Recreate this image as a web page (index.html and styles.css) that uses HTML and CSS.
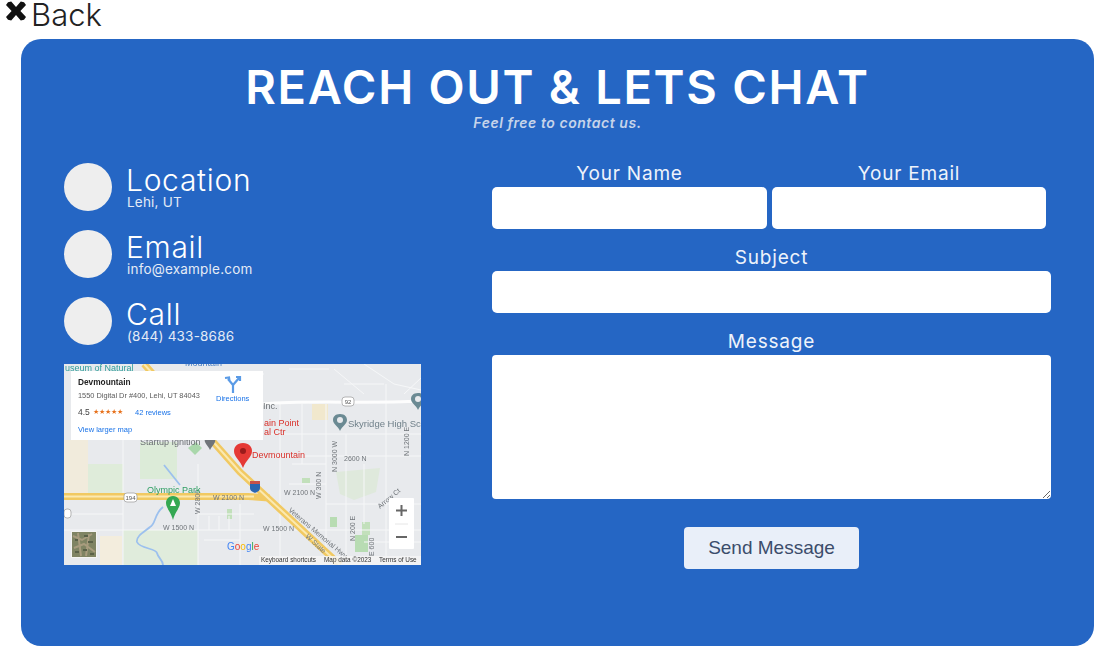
FILE: index.html
```html
<!DOCTYPE html>
<html lang="en">
<head>
    <meta charset="UTF-8">
    <meta name="viewport" content="width=device-width, initial-scale=1.0">
    <title>Contact</title>
    <link rel="stylesheet" href="styles.css">
</head>
<body>
    <a class="back-link" href="#">
        <svg class="back-icon" viewBox="0 0 22 20" aria-hidden="true">
            <path d="M3 1.2 L6.2 0.4 L11 6 L15.8 0.4 L19 1.2 L21 4 L15.4 10 L21 16 L19 18.8 L15.8 19.6 L11 14 L6.2 19.6 L3 18.8 L1 16 L6.6 10 L1 4 Z"/>
        </svg>
        <span>Back</span>
    </a>

    <main class="contact-card">
        <h1>REACH OUT &amp; LETS CHAT</h1>
        <p class="tagline">Feel free to contact us.</p>

        <div class="contact-columns">
            <section class="contact-info">
                <div class="info-row">
                    <div class="info-circle"></div>
                    <div>
                        <h2>Location</h2>
                        <p>Lehi, UT</p>
                    </div>
                </div>
                <div class="info-row">
                    <div class="info-circle"></div>
                    <div>
                        <h2>Email</h2>
                        <p>info@example.com</p>
                    </div>
                </div>
                <div class="info-row">
                    <div class="info-circle"></div>
                    <div>
                        <h2>Call</h2>
                        <p>(844) 433-8686</p>
                    </div>
                </div>

                <svg class="map" viewBox="0 0 357 201" role="img" aria-label="Map of Devmountain in Lehi">
                    <rect width="357" height="201" fill="#e8eaed"/>

                    <!-- parks and land -->
                    <rect x="59" y="166" width="75" height="35" fill="#e0ecdc"/>
                    <rect x="24" y="100" width="35" height="29" fill="#dfecda"/>
                    <rect x="0" y="76" width="24" height="53" fill="#f1ebdc"/>
                    <rect x="36" y="172" width="22" height="29" fill="#f3eddd"/>
                    <rect x="76" y="78" width="37" height="37" fill="#dcebd8"/>
                    <path d="M272 108 L316 104 L312 128 L290 136 L276 130 Z" fill="#dfe9dc"/>
                    <rect x="266" y="153" width="7" height="10" fill="#b8dcb3"/>
                    <rect x="298" y="158" width="8" height="13" fill="#c2e0bb"/>
                    <rect x="291" y="171" width="13" height="17" fill="#b8dcb3"/>
                    <rect x="238" y="114" width="8" height="5" fill="#c2e0bb"/>
                    <rect x="163" y="145" width="5" height="10" fill="#c2e0bb"/>
                    <path d="M124 84 L132 78 L138 84 L131 91 Z" fill="#a9d7ab"/>
                    <rect x="248" y="40" width="16" height="16" fill="#f1e8cd"/>

                    <!-- small white roads -->
                    <g fill="none" stroke="#f6f7f8" stroke-width="1">
                        <path d="M59 76V201M134 100V201M0 166H360M176 140V201M216 40V201M262 40V201M282 70V201M322 20V192"/>
                        <path d="M120 10 H200 M205 70 H357 M205 92 H357 M300 0 L330 20 L357 26 M262 140 H357 M300 178 H357"/>
                        <path d="M0 150 H59 M134 150 H190 M140 176 H176 M225 120 H262 M280 20 H320 M340 30 L357 14"/>
                        <path d="M238 40V100 M300 100V160 M228 100 H262 M145 152V166 M155 152V166 M165 152V166 M270 5 L300 30 M225 5 H265"/>
                    </g>
                    <path d="M199 40 C 240 36, 300 40, 357 37" fill="none" stroke="#fdfdfd" stroke-width="3"/>

                    <!-- river -->
                    <path d="M100 101 L116 121 M99 143 C90 150, 92 160, 86 163 C80 168, 72 172, 73 178 C76 185, 92 184, 93 189 C94 194, 99 196, 99 201" fill="none" stroke="#9cc0ee" stroke-width="1.8"/>

                    <!-- highways -->
                    <path d="M0 132.500 H184 C192 132.500, 198 134, 206 134" fill="none" stroke="#f1c962" stroke-width="7"/>
                    <path d="M0 132.500 H190" fill="none" stroke="#fbe9b0" stroke-width="2"/>
                    <path d="M80 0 L176 108 L276 201" fill="none" stroke="#f1c962" stroke-width="7"/>
                    <path d="M80 0 L176 108 L276 201" fill="none" stroke="#fbe9b0" stroke-width="2"/>

                    <!-- shields -->
                    <rect x="60" y="129" width="13" height="9" rx="3" fill="#fff" stroke="#9a9a9a" stroke-width=".7"/>
                    <text class="road" x="66.500" y="136" text-anchor="middle">194</text>
                    <rect x="278" y="33" width="12" height="9" rx="3" fill="#fff" stroke="#9a9a9a" stroke-width=".7"/>
                    <text class="road" x="284" y="40" text-anchor="middle">92</text>
                    <rect x="0" y="145" width="7" height="9" rx="3" fill="#fff" stroke="#9a9a9a" stroke-width=".7"/>
                    <path d="M186 119 H196 V124 C196 127, 193 128, 191 129 C189 128, 186 127, 186 124 Z" fill="#2b66b0"/>
                    <rect x="186" y="117" width="10" height="3" fill="#c8524a"/>

                    <!-- street labels -->
                    <g class="street">
                        <text x="149" y="136">W 2100 N</text>
                        <text x="220" y="131">W 2100 N</text>
                        <text x="99" y="166">W 1500 N</text>
                        <text x="199" y="167">W 1500 N</text>
                        <text x="280" y="97">2600 N</text>
                        <text transform="translate(273 108) rotate(-90)">N 3000 W</text>
                        <text transform="translate(345 92) rotate(-90)">N 1200 E</text>
                        <text transform="translate(257 135) rotate(-90)">W 300 N</text>
                        <text transform="translate(291 177) rotate(-90)">N 200 E</text>
                        <text transform="translate(310 192) rotate(-90)">E 600</text>
                        <text transform="translate(136 150) rotate(-90)">W 2800</text>
                        <text transform="translate(224 147) rotate(40)">Veterans Memorial Hwy</text>
                        <text transform="translate(241 173) rotate(42)">W State</text>
                        <text transform="translate(316 145) rotate(-40)">Arrow Ct</text>
                    </g>

                    <!-- place labels -->
                    <text class="place place-teal" x="1" y="7">useum of Natural</text>
                    <text class="place place-blue" x="121" y="2">Mountain</text>
                    <text class="place place-gray" x="76" y="81">Startup Ignition</text>
                    <text class="place place-gray" x="199" y="45">Inc.</text>
                    <text class="place place-red" x="200" y="62">ain Point</text>
                    <text class="place place-red" x="200" y="71">al Ctr</text>
                    <text class="place place-red" x="188" y="94">Devmountain</text>
                    <text class="place place-green" x="83" y="129">Olympic Park</text>
                    <text class="place place-slate" x="284" y="63">Skyridge High Sch</text>

                    <!-- pins -->
                    <path d="M146 72 C150 72, 152 75, 151 78 C150 81, 147 83, 146 86 C145 83, 142 81, 141 78 C140 75, 142 72, 146 72 Z" fill="#70757a"/>
                    <path d="M276 50 C281 50, 283 53, 283 56 C283 60, 278 62, 276 67 C274 62, 269 60, 269 56 C269 53, 271 50, 276 50 Z" fill="#6b8a93"/>
                    <circle cx="276" cy="56" r="3" fill="#e8eaed"/>
                    <path d="M354 29 C359 29, 361 32, 361 35 C361 39, 356 41, 354 46 C352 41, 347 39, 347 35 C347 32, 349 29, 354 29 Z" fill="#6b8a93"/>
                    <circle cx="354" cy="35" r="3" fill="#e8eaed"/>
                    <path d="M109 132 C114 132, 116 136, 116 139 C116 144, 111 148, 109 156 C107 148, 102 144, 102 139 C102 136, 104 132, 109 132 Z" fill="#34a853"/>
                    <path d="M109 135 L112 142 H106 Z" fill="#fff"/>
                    <path d="M179 79 C185 79, 188 83, 188 87 C188 93, 182 96, 179 104 C176 96, 170 93, 170 87 C170 83, 173 79, 179 79 Z" fill="#e53935"/>
                    <circle cx="179" cy="87" r="3" fill="#9b1b1b"/>

                    <!-- info window -->
                    <rect x="7" y="7" width="192" height="69" fill="#fff"/>
                    <text class="win-title" x="14" y="21">Devmountain</text>
                    <text class="win-text" x="14" y="34">1550 Digital Dr #400, Lehi, UT 84043</text>
                    <text class="win-rating" x="14" y="51">4.5</text>
                    <text class="win-stars" x="29" y="50">★★★★★</text>
                    <text class="win-link" x="71" y="51">42 reviews</text>
                    <text class="win-link" x="14" y="68">View larger map</text>
                    <path d="M169 29 V21 L164 15 M169 21 L175 14 M161 14 L165 13.500 L165.500 17 M172 13 H176 V17" fill="none" stroke="#5b9be6" stroke-width="2.200"/>
                    <text class="win-link" x="152" y="37">Directions</text>

                    <!-- controls -->
                    <rect x="325" y="134" width="25" height="51" rx="1" fill="#fff"/>
                    <path d="M331 160 H344" stroke="#e6e6e6"/>
                    <path d="M337.500 141 V152 M332 146.500 H343 M332 173 H343" stroke="#666" stroke-width="2"/>

                    <!-- satellite thumb -->
                    <rect x="7" y="167" width="26" height="27" fill="#f4f4f2"/>
                    <rect x="8" y="168" width="24" height="25" fill="#7f8463"/>
                    <path d="M9 172 L18 176 L28 170 M10 184 L20 180 L31 188 M14 169 L17 192 M25 170 L22 192" fill="none" stroke="#a89c7e" stroke-width="2"/>
                    <path d="M11 176 H14 M20 172 H24 M24 178 H29 M11 188 H15 M19 186 H23 M26 190 H30" stroke="#5a6148" stroke-width="2"/>

                    <!-- logo and attribution -->
                    <text class="logo" x="163" y="186"><tspan fill="#4285f4">G</tspan><tspan fill="#ea4335">o</tspan><tspan fill="#fbbc05">o</tspan><tspan fill="#4285f4">g</tspan><tspan fill="#34a853">l</tspan><tspan fill="#ea4335">e</tspan></text>
                    <rect x="195" y="192" width="162" height="9" fill="#f5f5f5" opacity=".85"/>
                    <g class="attribution">
                        <text x="197" y="198">Keyboard shortcuts</text>
                        <text x="260" y="198">Map data ©2023</text>
                        <text x="315" y="198">Terms of Use</text>
                    </g>
                </svg>
            </section>

            <form class="contact-form">
                <div class="form-row">
                    <div class="field">
                        <label for="name">Your Name</label>
                        <input type="text" id="name">
                    </div>
                    <div class="field">
                        <label for="email">Your Email</label>
                        <input type="email" id="email">
                    </div>
                </div>
                <div class="field">
                    <label for="subject">Subject</label>
                    <input type="text" id="subject">
                </div>
                <div class="field">
                    <label for="message">Message</label>
                    <textarea id="message"></textarea>
                </div>
                <button type="button" class="send-button">Send Message</button>
            </form>
        </div>
    </main>
</body>
</html>
```

FILE: styles.css
```css
body {
    font-family: Inter, "Open Sans", sans-serif;
    margin: 0;
    padding: 0;
    background-color: #fff;
    color: #222;
}

.back-link {
    display: flex;
    align-items: flex-start;
    gap: 4px;
    height: 39px;
    padding-left: 5px;
    color: #222;
    font-size: 31px;
    font-weight: 300;
    line-height: 30px;
    text-decoration: none;
}

.back-icon {
    width: 22px;
    height: 20px;
    margin-top: 1px;
    fill: #111;
}

.contact-card {
    box-sizing: border-box;
    width: 1073px;
    height: 607px;
    margin-left: 21px;
    padding-top: 20px;
    background-color: #2566c4;
    border-radius: 20px;
    color: #fff;
}

h1 {
    margin: 0;
    font-size: 47px;
    font-weight: 600;
    line-height: 56px;
    letter-spacing: 1.7px;
    text-align: center;
}

.tagline {
    margin: 0;
    color: #c6d4ea;
    font-size: 14px;
    font-style: italic;
    font-weight: 600;
    line-height: 16px;
    letter-spacing: 0.55px;
    text-align: center;
}

.contact-columns {
    display: flex;
    gap: 71px;
    margin-top: 32px;
    padding-left: 43px;
}

.contact-info {
    width: 357px;
}

.info-row {
    display: flex;
    align-items: center;
    gap: 15px;
    height: 48px;
    margin-bottom: 19px;
}

.info-circle {
    width: 48px;
    height: 48px;
    border-radius: 50%;
    background-color: #eee;
}

.info-row h2 {
    margin: 0 0 0 -1px;
    font-size: 30px;
    font-weight: 300;
    line-height: 30px;
    letter-spacing: 0.7px;
}

.info-row p {
    margin: 0;
    color: #e4ebf6;
    font-size: 13.500px;
    font-weight: 400;
    line-height: 14px;
    letter-spacing: 0.2px;
}

.map {
    display: block;
    width: 357px;
    height: 201px;
    filter: blur(0.4px);
}

.map text {
    font-family: "Liberation Sans", Arial, sans-serif;
}

.road {
    fill: #555;
    font-size: 6px;
}

.street text {
    fill: #70757a;
    font-size: 7px;
}

.place {
    font-size: 9px;
}

.place-teal { fill: #2f9e9a; }
.place-blue { fill: #4a7fc4; }
.place-gray { fill: #6b6f73; }
.place-red { fill: #d9302a; }
.place-green { fill: #2f9e63; }
.place-slate { fill: #70808a; font-size: 9.500px; }

.win-title {
    fill: #222;
    font-size: 8.300px;
    font-weight: 700;
}

.win-text {
    fill: #5b5b5b;
    font-size: 7.400px;
}

.win-rating {
    fill: #444;
    font-size: 8.500px;
}

.win-stars {
    fill: #e7711b;
    font-size: 7.200px;
}

.win-link {
    fill: #1a73e8;
    font-size: 7.500px;
}

.logo {
    font-size: 10px;
}

.attribution text {
    fill: #333;
    font-size: 6.400px;
}

.contact-form {
    display: flex;
    flex-direction: column;
    gap: 18px;
    width: 559px;
}

.form-row {
    display: grid;
    grid-template-columns: 275px 274px;
    gap: 5px;
}

.field {
    display: flex;
    flex-direction: column;
}

.field label {
    padding-bottom: 2px;
    color: #eef3fb;
    font-size: 19px;
    font-weight: 400;
    line-height: 22px;
    letter-spacing: 0.8px;
    text-align: center;
}

.field input,
.field textarea {
    box-sizing: border-box;
    width: 100%;
    margin: 0;
    padding: 4px 8px;
    border: none;
    border-radius: 5px;
    background-color: #fff;
}

.field input {
    height: 42px;
}

.field textarea {
    display: block;
    height: 144px;
    border-radius: 4px;
}

.send-button {
    align-self: center;
    width: 175px;
    height: 42px;
    margin-top: 10px;
    border: none;
    border-radius: 4px;
    background-color: #e9eff9;
    color: #3b4c6b;
    font-family: "Liberation Sans", Arial, sans-serif;
    font-size: 19px;
    cursor: pointer;
}
```
